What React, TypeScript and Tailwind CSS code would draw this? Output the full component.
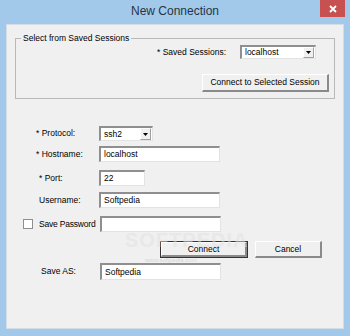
import React from 'react';

const font = { fontFamily: '"Liberation Sans", Arial, sans-serif' };

const Field = ({ value, w, h = 16 }: { value: string; w: number; h?: number }) => (
  <div
    className="bg-white border-t-2 border-l-2 border-b border-r border-t-[#8f8f8f] border-l-[#8f8f8f] border-b-[#e3e3e3] border-r-[#e3e3e3] flex items-center pl-[3px] text-[8.5px] text-black leading-none whitespace-nowrap"
    style={{ width: w, height: h }}
  >
    {value}
  </div>
);

const Select = ({ value, w, h = 15 }: { value: string; w: number; h?: number }) => (
  <div
    className="bg-white border-t-2 border-l-2 border-b border-r border-t-[#8f8f8f] border-l-[#8f8f8f] border-b-[#e3e3e3] border-r-[#e3e3e3] flex items-center text-[8.5px] text-black leading-none"
    style={{ width: w, height: h }}
  >
    <span className="flex-1 pl-[3px]">{value}</span>
    <div className="w-[11px] h-full bg-[#f0f0f0] border-l border-t border-l-[#ffffff] border-t-[#ffffff] border-r border-b border-r-[#a0a0a0] border-b-[#a0a0a0] flex items-center justify-center mr-[1px]">
      <svg width="5" height="3" viewBox="0 0 5 3">
        <path d="M0 0h5L2.5 3z" fill="#000" />
      </svg>
    </div>
  </div>
);

const Button = ({ label, w, h = 17, primary = false }: { label: string; w: number; h?: number; primary?: boolean }) => (
  <div className={`${primary ? 'border border-[#333333]' : ''}`} style={{ width: w, height: h }}>
    <div className="w-full h-full bg-[#f0f0f0] border-t border-l border-t-white border-l-white border-b-2 border-r-2 border-b-[#8a8a8a] border-r-[#8a8a8a] flex items-center justify-center text-[8.5px] text-black leading-none whitespace-nowrap">
      {label}
    </div>
  </div>
);

export default function App() {
  return (
    <div className="w-[350px] h-[336px] bg-[#a3c9ea] flex flex-col overflow-hidden" style={font}>
      <div className="h-[24px] flex items-start shrink-0">
        <div className="w-[30px]" />
        <div className="flex-1 text-center text-[12px] text-[#263445] pt-[5px] leading-none">New Connection</div>
        <div className="w-[25px] h-[17px] bg-[#c75050] mr-[5px] flex items-center justify-center">
          <svg width="8" height="8" viewBox="0 0 8 8">
            <path d="M1 1l6 6M7 1L1 7" stroke="#fff" strokeWidth="1.8" />
          </svg>
        </div>
      </div>

      <div className="relative mx-[6px] mb-[7px] flex-1 bg-[#f0f0f0] border border-[#d4dde6] flex flex-col whitespace-nowrap">
        <fieldset className="ml-[8px] mt-[8px] w-[320px] border border-[#b9b9b9] pb-[6px]">
          <legend className="ml-[5px] px-[2px] text-[8.5px] text-black leading-[11px]">Select from Saved Sessions</legend>
          <div className="flex items-center justify-end pr-[18px] mt-[1px]">
            <span className="text-[8.5px] text-black mr-[14px]">* Saved Sessions:</span>
            <Select value="localhost" w={76} h={14} />
          </div>
          <div className="flex justify-end pr-[5px] mt-[15px]">
            <Button label="Connect to Selected Session" w={127} h={18} />
          </div>
        </fieldset>

        <div className="flex items-center h-[15px] mt-[27px] text-[8.5px] text-black">
          <span className="pl-[29px] w-[92px]">* Protocol:</span>
          <Select value="ssh2" w={54} />
        </div>
        <div className="flex items-center h-[16px] mt-[5px] text-[8.5px] text-black">
          <span className="pl-[29px] w-[92px]">* Hostname:</span>
          <Field value="localhost" w={121} />
        </div>
        <div className="flex items-center h-[16px] mt-[8px] text-[8.5px] text-black">
          <span className="pl-[32px] w-[92px]">* Port:</span>
          <Field value="22" w={46} />
        </div>
        <div className="flex items-center h-[16px] mt-[6px] text-[8.5px] text-black">
          <span className="pl-[32px] w-[92px]">Username:</span>
          <Field value="Softpedia" w={121} />
        </div>
        <div className="flex items-center h-[16px] mt-[8px] text-[8.5px] text-black">
          <div className="ml-[16px] w-[10px] h-[10px] shrink-0 bg-white border border-[#8f8f8f]" />
          <span className="ml-[6px] w-[61px] shrink-0 tracking-[-0.2px]">Save Password</span>
          <Field value="" w={121} />
        </div>
        <div className="flex items-center mt-[9px]">
          <div className="ml-[153px]">
            <Button label="Connect" w={88} h={17} primary />
          </div>
          <div className="ml-[7px]">
            <Button label="Cancel" w={67} h={17} />
          </div>
        </div>
        <div className="flex items-center h-[17px] mt-[5px] text-[8.5px] text-black">
          <span className="pl-[34px] w-[93px]">Save AS:</span>
          <Field value="Softpedia" w={121} h={17} />
        </div>

        <div className="absolute left-[118px] top-[205px] pointer-events-none text-[20px] font-bold tracking-[1px] text-[#e2e2e2] opacity-50 leading-none">SOFTPEDIA</div>
        <div className="absolute left-[138px] top-[232px] pointer-events-none text-[6px] text-[#d6d6d6] leading-none">www.softpedia.com</div>
      </div>
    </div>
  );
}
